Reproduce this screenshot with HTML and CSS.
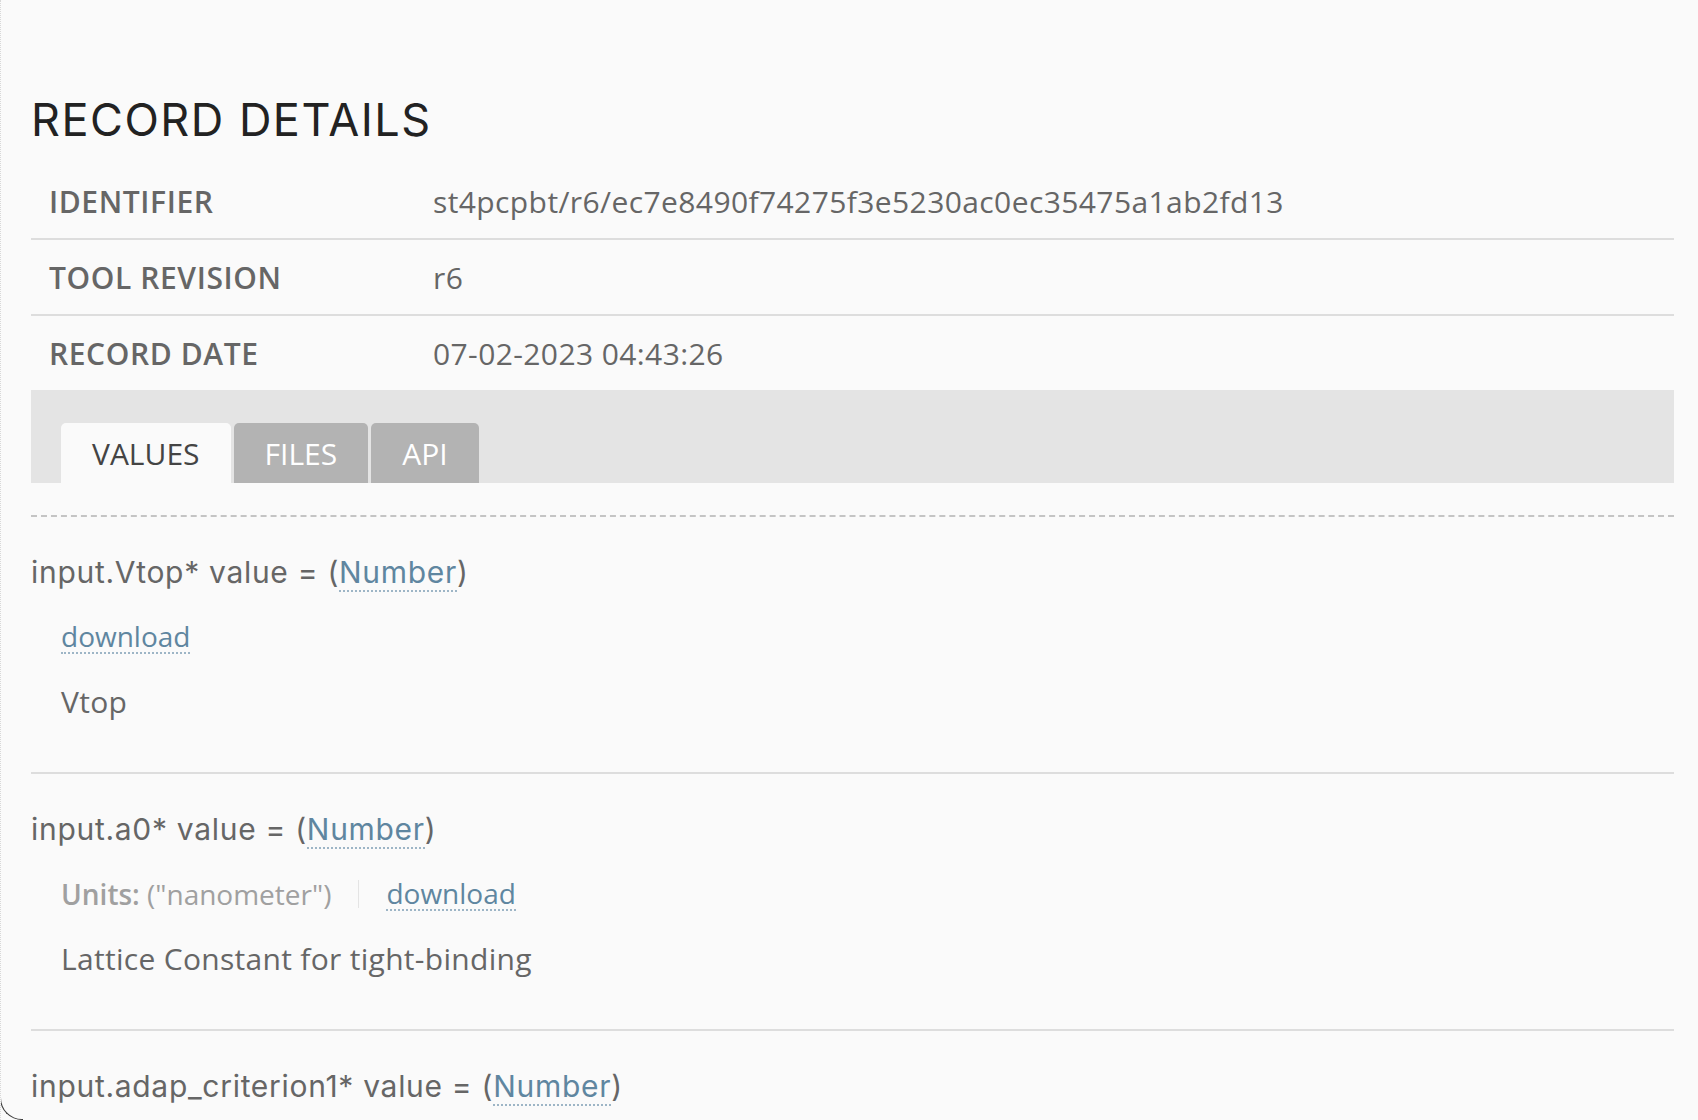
FILE: index.html
```html
<!DOCTYPE html>
<html lang="en">
<head>
<meta charset="utf-8">
<title>Record Details</title>
<link rel="stylesheet" href="styles.css">
</head>
<body>
<div class="page">
  <h1 class="title">RECORD DETAILS</h1>
  <div class="meta">
    <div class="meta-row">
      <div class="meta-label">IDENTIFIER</div>
      <div class="meta-value">st4pcpbt/r6/ec7e8490f74275f3e5230ac0ec35475a1ab2fd13</div>
    </div>
    <div class="meta-row">
      <div class="meta-label">TOOL REVISION</div>
      <div class="meta-value">r6</div>
    </div>
    <div class="meta-row">
      <div class="meta-label">RECORD DATE</div>
      <div class="meta-value">07-02-2023 04:43:26</div>
    </div>
  </div>
  <div class="tabbar">
    <div class="tab tab-active">VALUES</div>
    <div class="tab">FILES</div>
    <div class="tab">API</div>
  </div>
  <div class="panel">
    <div class="field">
      <div class="field-title">input.Vtop* value = (<a class="link">Number</a>)</div>
      <div class="field-meta"><a class="link">download</a></div>
      <div class="field-desc">Vtop</div>
    </div>
    <div class="field">
      <div class="field-title">input.a0* value = (<a class="link">Number</a>)</div>
      <div class="field-meta">
        <span class="units"><b>Units:</b> ("nanometer")</span>
        <span class="sep"></span>
        <a class="link">download</a>
      </div>
      <div class="field-desc">Lattice Constant for tight-binding</div>
    </div>
    <div class="field">
      <div class="field-title">input.adap_criterion1* value = (<a class="link">Number</a>)</div>
    </div>
  </div>
</div>
</body>
</html>
```
FILE: styles.css
```css
* { box-sizing: border-box; }
html, body { margin: 0; padding: 0; background: #fafafa; }
body { font-family: "Open Sans", "Noto Sans", sans-serif; color: #666; }

.page {
  position: relative;
  height: 1120px;
  overflow: hidden;
  padding: 0 24px 0 30px;
  border-left: 1px dotted #d8d8d8;
}
.page::after {
  content: "";
  position: absolute;
  left: -1px;
  bottom: 0;
  width: 22px;
  height: 30px;
  border-left: 1.5px solid #3a3a3a;
  border-bottom: 1.5px solid #3a3a3a;
  border-bottom-left-radius: 22px;
}

.title {
  margin: 0;
  padding-top: 88px;
  height: 164px;
  font-family: Inter, "Liberation Sans", sans-serif;
  font-weight: 400;
  font-size: 45px;
  line-height: 64px;
  color: #222;
  letter-spacing: 1.5px;
}

.meta-row {
  display: grid;
  grid-template-columns: 384px 1fr;
  align-items: center;
  height: 76px;
  padding-left: 18px;
  border-bottom: 2px solid #ddd;
  font-size: 30px;
}
.meta-row:last-child { border-bottom: none; height: 74px; }
.meta-label { font-weight: 600; color: #666; letter-spacing: 0.6px; }
.meta-value { color: #666; letter-spacing: 0.4px; }

.tabbar {
  display: flex;
  align-items: flex-end;
  gap: 3px;
  height: 93px;
  background: #e4e4e4;
  padding-left: 30px;
}
.tab {
  height: 60px;
  line-height: 62px;
  padding: 0 31px;
  background: #b3b3b3;
  color: #fff;
  font-size: 30px;
  border-radius: 5px 5px 0 0;
}
.tab-active { background: #fafafa; color: #444; }

.panel {
  margin-top: 32px;
  border-top: 2px dashed #c4c4c4;
}

.field {
  padding: 35px 0 50px;
  border-bottom: 2px solid #ddd;
}
.field-title {
  font-family: Inter, "Liberation Sans", sans-serif;
  font-size: 30px;
  letter-spacing: 0.7px;
  line-height: 40px;
  color: #666;
}
.field-meta {
  margin-top: 28px;
  padding-left: 30px;
  display: flex;
  align-items: center;
  height: 34px;
  font-size: 28px;
}
.field-meta > * { line-height: 32px; }
.field-desc {
  margin-top: 28px;
  padding-left: 30px;
  font-size: 30px;
  letter-spacing: 0.3px;
  line-height: 40px;
  color: #666;
}
.link {
  color: #5f86a0;
  text-decoration: none;
  border-bottom: 2px dotted #9db5c6;
  line-height: 1.15;
}
.units { color: #a0a0a0; }
.units b { font-weight: 600; }
.sep {
  width: 1px;
  height: 28px;
  background: #e4e4e4;
  margin: 0 27px;
}
```
